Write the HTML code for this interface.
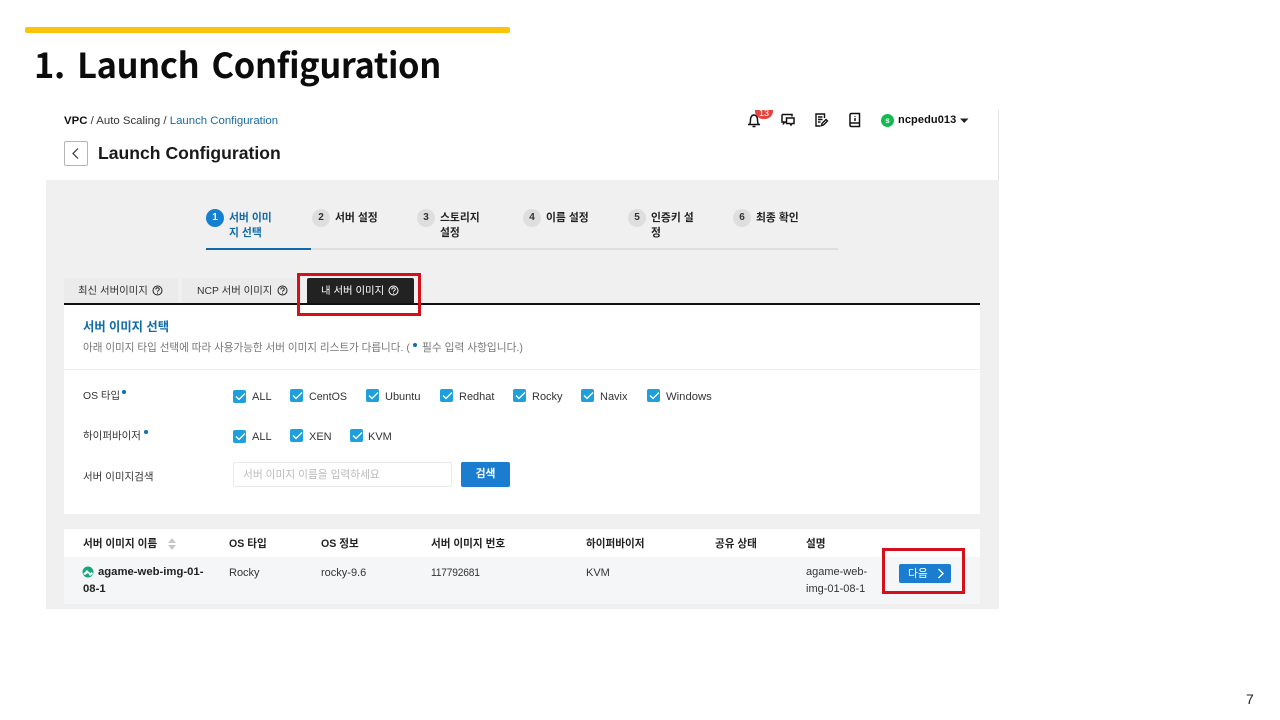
<!DOCTYPE html>
<html lang="ko"><head><meta charset="utf-8"><style>
html,body{margin:0;padding:0;background:#fff}
#p{position:relative;width:1280px;height:720px;overflow:hidden;background:#fff;font-family:"Liberation Sans","Noto Sans CJK KR",sans-serif;color:#222}
#p div,#p svg{position:absolute}
.t{white-space:nowrap;font-size:10.4px;line-height:14px;color:#333}
.b{font-weight:bold}
.n{width:18px;height:18px;border-radius:50%;background:#dedede;font-size:10px;line-height:18px;text-align:center;font-weight:bold;color:#333}
.s{white-space:nowrap;font-size:10.8px;line-height:14px;font-weight:bold;color:#222}
.h{font-size:10.6px}
.c{width:13px;height:13px;background:#1f9fdc;border-radius:2px}
.l{font-size:11px}
.d{width:4px;height:4px;border-radius:50%;background:#0b6fb8}
</style></head><body><div id="p">
<div style="left:25px;top:27px;width:485px;height:6px;background:#fcc30b;border-radius:2px"></div>
<div style="left:34px;top:39px;font-size:34.4px;line-height:48px;font-weight:bold;color:#0c0c0c;white-space:nowrap;font-family:'Noto Sans CJK KR','Liberation Sans',sans-serif;letter-spacing:-.35px;word-spacing:3px">1. Launch Configuration</div>

<div style="left:998px;top:110px;width:1px;height:410px;background:#e4e4e4"></div>
<div class="t" style="left:64px;top:114px;font-size:11.4px"><span style="font-weight:bold;color:#111">VPC</span> / Auto Scaling / <span style="color:#1a6aa5">Launch Configuration</span></div>
<div style="left:64px;top:141px;width:22px;height:23px;border:1px solid #b5b5b5;border-radius:2px"></div>
<svg style="left:64px;top:141px" width="24" height="25" fill="none" stroke="#333" stroke-width="1.2"><path d="M14 7.5L9 12.5L14 17.5"/></svg>
<div style="left:98px;top:141px;font-size:17.6px;line-height:25px;font-weight:bold;color:#1a1a1a;white-space:nowrap">Launch Configuration</div>

<svg style="left:746px;top:112px" width="16" height="16" fill="none" stroke="#111" stroke-width="1.5"><path d="M2 12.500h12M3.500 12.500c1-1.500 1-3 1-5C4.500 5 6 3 8 3s3.500 2 3.500 4.500c0 2 0 3.500 1 5M6.500 14.500h3"/></svg>
<div style="left:755px;top:110px;width:18px;height:9px;background:#e8423c;border-radius:0 0 8px 8px;color:#fff;font-size:9px;line-height:7px;text-align:center;overflow:hidden">13</div>
<svg style="left:780px;top:112px" width="16" height="16" fill="none" stroke="#111" stroke-width="1.5"><path d="M2 2.500h10v2M2 2.500v7.500l1.500 0v1.500L5 10h1M6.500 6h7.500v5.500h-2l-1 1.500-1-1.500H6.500z"/></svg>
<svg style="left:813px;top:112px" width="16" height="16" fill="none" stroke="#111" stroke-width="1.4"><path d="M11.500 6V2H3v12h4.500M5 5h4.500M5 7.500h4.500M5 10h2.500M8.500 13.500l.5-2 4-4 1.500 1.500-4 4z"/></svg>
<svg style="left:847px;top:112px" width="16" height="16" fill="none" stroke="#111" stroke-width="1.5"><path d="M3 3c0-1 .5-1.500 1.500-1.500h8V14.500h-8C3.500 14.500 3 14 3 13zM3 11h9.500M8 4v.8M8 6v3"/></svg>
<div style="left:881px;top:114px;width:13px;height:13px;border-radius:50%;background:#12bb4f;color:#fff;font-size:8px;line-height:13px;text-align:center;font-weight:bold">s</div>
<div class="t b" style="left:898px;top:113px;font-size:11px;color:#111;letter-spacing:.1px">ncpedu013</div>
<svg style="left:960px;top:118px" width="9" height="6"><path d="M0 0.500h8.500L4.250 5z" fill="#222"/></svg>

<div style="left:46px;top:180px;width:953px;height:429px;background:#f0f0f0"></div>

<div class="n" style="left:206px;top:209px;background:#1680d0;color:#fff">1</div>
<div class="s" style="left:229px;top:211px;color:#0f6aa8;line-height:14.500px">서버 이미<br>지 선택</div>
<div class="n" style="left:312px;top:209px">2</div><div class="s" style="left:335px;top:211px">서버 설정</div>
<div class="n" style="left:417px;top:209px">3</div><div class="s" style="left:440px;top:211px;line-height:14.500px">스토리지<br>설정</div>
<div class="n" style="left:523px;top:209px">4</div><div class="s" style="left:546px;top:211px">이름 설정</div>
<div class="n" style="left:628px;top:209px">5</div><div class="s" style="left:651px;top:211px;line-height:14.500px">인증키 설<br>정</div>
<div class="n" style="left:733px;top:209px">6</div><div class="s" style="left:756px;top:211px">최종 확인</div>
<div style="left:206px;top:248px;width:632px;height:2px;background:#dedede"></div>
<div style="left:206px;top:248px;width:105px;height:2px;background:#0f6aa8"></div>

<div style="left:64px;top:278px;width:114px;height:25px;background:#ebebeb"></div>
<div class="t" style="left:78px;top:285px">최신 서버이미지</div>
<div style="left:182px;top:278px;width:114px;height:25px;background:#ebebeb"></div>
<div class="t" style="left:197px;top:285px">NCP 서버 이미지</div>
<div style="left:307px;top:278px;width:107px;height:25px;background:#222;border-radius:2px 2px 0 0"></div>
<div class="t" style="left:321px;top:285px;color:#fff">내 서버 이미지</div>
<svg style="left:152px;top:285px" width="11" height="11" fill="none" stroke="#222"><circle cx="5.500" cy="5.500" r="4.500"/><path d="M3.800 4.500c0-2.300 3.500-2.300 3.500-.2 0 1.200-1.800 1.200-1.800 2.500M5.500 7.800v1"/></svg>
<svg style="left:277px;top:285px" width="11" height="11" fill="none" stroke="#222"><circle cx="5.500" cy="5.500" r="4.500"/><path d="M3.800 4.500c0-2.300 3.500-2.300 3.500-.2 0 1.200-1.800 1.200-1.800 2.500M5.500 7.800v1"/></svg>
<svg style="left:388px;top:285px" width="11" height="11" fill="none" stroke="#fff"><circle cx="5.500" cy="5.500" r="4.500"/><path d="M3.800 4.500c0-2.300 3.500-2.300 3.500-.2 0 1.200-1.800 1.200-1.800 2.500M5.500 7.800v1"/></svg>

<div style="left:64px;top:303px;width:916px;height:2px;background:#111"></div>
<div style="left:64px;top:305px;width:916px;height:209px;background:#fff"></div>
<div style="left:64px;top:369px;width:916px;height:1px;background:#eee"></div>
<div class="t" style="left:83px;top:320px;font-size:12.300px;font-weight:bold;color:#0f6aa8">서버 이미지 선택</div>
<div class="t" style="left:83px;top:341px;font-size:10.550px;color:#777">아래 이미지 타입 선택에 따라 사용가능한 서버 이미지 리스트가 다릅니다. (</div>
<div class="d" style="left:413px;top:343px"></div>
<div class="t" style="left:422px;top:341px;font-size:10.700px;color:#777">필수 입력 사항입니다.)</div>

<div class="t" style="left:83px;top:390px;font-size:10.400px">OS 타입</div><div class="d" style="left:122px;top:390px"></div>
<div class="t" style="left:83px;top:429px;font-size:10.500px">하이퍼바이저</div><div class="d" style="left:144px;top:430px"></div>
<div class="t" style="left:83px;top:470px;font-size:10.500px">서버 이미지검색</div>

<div class="c" style="left:233px;top:390px"></div><div class="t l" style="left:252px;top:390px">ALL</div>
<div class="c" style="left:290px;top:389px"></div><div class="t l" style="left:309px;top:390px;font-size:10.700px">CentOS</div>
<div class="c" style="left:366px;top:389px"></div><div class="t l" style="left:385px;top:390px">Ubuntu</div>
<div class="c" style="left:440px;top:389px"></div><div class="t l" style="left:459px;top:390px">Redhat</div>
<div class="c" style="left:513px;top:389px"></div><div class="t l" style="left:532px;top:390px">Rocky</div>
<div class="c" style="left:581px;top:389px"></div><div class="t l" style="left:600px;top:390px">Navix</div>
<div class="c" style="left:647px;top:389px"></div><div class="t l" style="left:666px;top:390px;font-size:11.300px">Windows</div>
<div class="c" style="left:233px;top:430px"></div><div class="t l" style="left:252px;top:430px">ALL</div>
<div class="c" style="left:290px;top:429px"></div><div class="t l" style="left:309px;top:430px">XEN</div>
<div class="c" style="left:350px;top:429px"></div><div class="t l" style="left:368px;top:430px">KVM</div>
<svg style="left:0;top:0" width="1280" height="720" fill="none" stroke="#fff" stroke-width="1.300"><path d="M236 396.500l3 3 6-6M293 395.500l3 3 6-6M369 395.500l3 3 6-6M443 395.500l3 3 6-6M516 395.500l3 3 6-6M584 395.500l3 3 6-6M650 395.500l3 3 6-6M236 436.500l3 3 6-6M293 435.500l3 3 6-6M353 435.500l3 3 6-6"/></svg>

<div style="left:233px;top:462px;width:217px;height:23px;border:1px solid #eaeaea;border-radius:2px"></div>
<div class="t" style="left:243px;top:468px;font-size:10.700px;color:#bbb">서버 이미지 이름을 입력하세요</div>
<div style="left:461px;top:462px;width:49px;height:25px;background:#1a7dd0;border-radius:2px;color:#fff;font-size:10.800px;font-weight:bold;line-height:25px;text-align:center">검색</div>

<div style="left:64px;top:529px;width:916px;height:28px;background:#fff"></div>
<div style="left:64px;top:557px;width:916px;height:47px;background:#f4f6f8"></div>
<div class="s h" style="left:83px;top:537px">서버 이미지 이름</div>
<svg style="left:168px;top:538px" width="8" height="13" fill="#c8c8c8"><path d="M0 5L4 0l4 5zM0 7l4 5 4-5z"/></svg>
<div class="s h" style="left:229px;top:537px">OS 타입</div>
<div class="s h" style="left:321px;top:537px">OS 정보</div>
<div class="s h" style="left:431px;top:537px">서버 이미지 번호</div>
<div class="s h" style="left:586px;top:537px">하이퍼바이저</div>
<div class="s h" style="left:715px;top:537px">공유 상태</div>
<div class="s h" style="left:806px;top:537px">설명</div>

<svg style="left:82px;top:566px" width="12" height="12"><circle cx="6" cy="6" r="5.500" fill="#17a77e"/><path d="M1 8l4-4 3 3 2-1 1 2-3 2-2-3-3 2z" fill="#fff"/></svg>
<div class="t b" style="left:98px;top:564px;font-size:11.300px;line-height:17px;color:#222">agame-web-img-01-</div>
<div class="t b" style="left:83px;top:581px;font-size:11.300px;line-height:17px;color:#222">08-1</div>
<div class="t l" style="left:229px;top:566px">Rocky</div>
<div class="t l" style="left:321px;top:566px">rocky-9.6</div>
<div class="t" style="left:431px;top:566px;font-size:11px;letter-spacing:-.2px;transform:scaleX(.93);transform-origin:0 0">117792681</div>
<div class="t l" style="left:586px;top:566px">KVM</div>
<div class="t l" style="left:806px;top:564px;line-height:17px">agame-web-<br>img-01-08-1</div>
<div style="left:899px;top:564px;width:52px;height:19px;background:#1a7dd0;border-radius:2px"></div>
<div class="t" style="left:908px;top:567px;color:#fff;font-size:10.800px">다음</div>
<svg style="left:936px;top:568px" width="10" height="12" fill="none" stroke="#fff" stroke-width="1.400"><path d="M2.500 1l4.500 4.500-4.500 4.500"/></svg>

<div style="left:297px;top:273px;width:118px;height:37px;border:3px solid #d5101c"></div>
<div style="left:882px;top:548px;width:77px;height:40px;border:3px solid #d5101c"></div>
<div style="left:1246px;top:690px;font-size:14px;line-height:18px;color:#222">7</div>
</div></body></html>
